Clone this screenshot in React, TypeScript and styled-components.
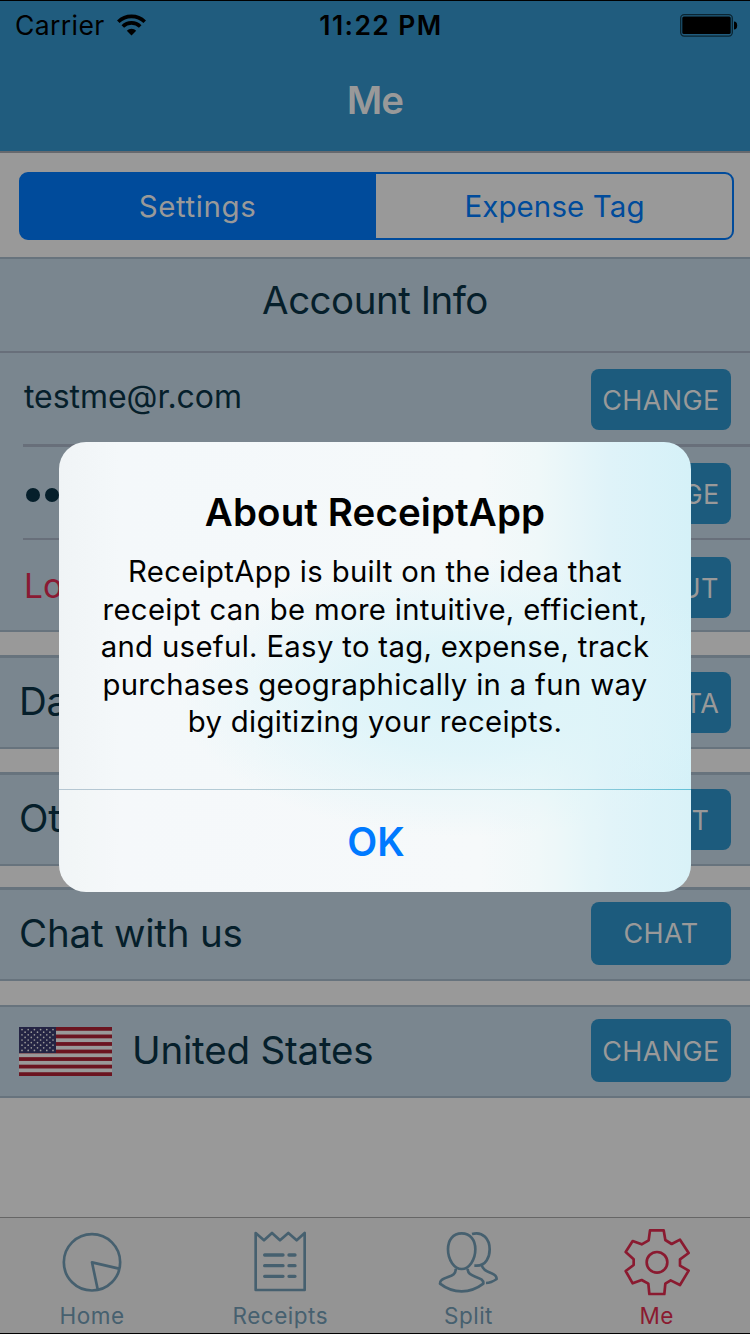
import React from "react";
import styled, { createGlobalStyle } from "styled-components";

const GlobalStyle = createGlobalStyle`
  * { box-sizing: border-box; }
  body { margin: 0; background: #999; overflow: hidden; }
`;

const Screen = styled.div`
  position: relative;
  width: 750px;
  height: 1334px;
  display: flex;
  flex-direction: column;
  overflow: hidden;
  background: #999;
  color: #061f2b;
  font-family: Inter, "Liberation Sans", sans-serif;
  border-top: 1px solid #000;
  border-bottom: 1px solid #000;
  white-space: nowrap;
`;

const Header = styled.header`
  height: 152px;
  flex: none;
  background: #205c7e;
  border-bottom: 2px solid #66696e;
`;

const StatusBar = styled.div`
  height: 49px;
  display: grid;
  grid-template-columns: 1fr auto 1fr;
  align-items: center;
  padding: 0 12px 1px 15px;
  color: #000;
  font-size: 26.5px;
`;

const Carrier = styled.div`
  display: flex;
  align-items: center;
  gap: 12.5px;
  letter-spacing: 0.4px;
`;

const Clock = styled.div`
  padding-left: 9px;
  font-weight: 600;
  letter-spacing: 1.4px;
`;

const BatteryIcon = styled.svg`
  justify-self: end;
  display: block;
`;

const Title = styled.h1`
  margin: 0;
  height: 102px;
  line-height: 101px;
  text-align: center;
  color: #999;
  font-size: 38.5px;
  font-weight: 600;
  letter-spacing: -1px;
`;

const SegmentBar = styled.div`
  height: 104px;
  flex: none;
  padding: 19px 16px 17px 19px;
`;

const Segments = styled.div`
  display: flex;
  height: 68px;
  border: 2px solid #004b9b;
  border-radius: 9px;
  background: linear-gradient(90deg, #004b9b 50%, transparent 50%) border-box;
`;

const Segment = styled.button<{ $active?: boolean }>`
  flex: ${(p) => (p.$active ? "0 0 356px" : "1")};
  border: 0;
  padding: 0 ${(p) => (p.$active ? 3 : 0)}px 0 0;
  background: transparent;
  color: ${(p) => (p.$active ? "#999" : "#004b9b")};
  font: 400 29.5px Inter, sans-serif;
  letter-spacing: ${(p) => (p.$active ? 0.6 : 0.1)}px;
`;

const Panel = styled.section<{ $top?: number; $gap?: number }>`
  flex: none;
  margin-top: ${(p) => p.$gap ?? 0}px;
  background: #7a868f;
  border-top: ${(p) => p.$top ?? 3}px solid #67737d;
  border-bottom: 2px solid #67737d;
`;

const PanelHeading = styled.h2`
  margin: 0;
  height: 94px;
  line-height: 83px;
  border-bottom: 2px solid #686f7a;
  text-align: center;
  font-size: 38.5px;
  font-weight: 400;
  letter-spacing: -0.5px;
`;

const Row = styled.div<{ $h?: number; $inset?: number }>`
  display: flex;
  height: ${(p) => p.$h ?? 89}px;
  padding: 0 19px 0 ${(p) => p.$inset ?? 19}px;
`;

const Divider = styled.div<{ $h: number }>`
  height: ${(p) => p.$h}px;
  margin-left: 23px;
  background: #686f7a;
`;

const Label = styled.div<{ $small?: boolean; $danger?: boolean }>`
  flex: 1;
  display: flex;
  align-items: center;
  padding-top: ${(p) => (p.$danger ? 2 : 0)}px;
  padding-bottom: ${(p) => (p.$danger ? 0 : 4)}px;
  font-size: ${(p) => (p.$danger ? 33.5 : p.$small ? 32 : 38.5)}px;
  letter-spacing: ${(p) => (p.$danger || p.$small ? -0.05 : -0.2)}px;
  color: ${(p) => (p.$danger ? "#8a1a33" : "inherit")};
`;

const Dots = styled.div`
  flex: 1;
  display: flex;
  align-items: center;
  gap: 5.3px;
  padding: 4px 0 0 2px;
`;

const Dot = styled.span`
  width: 14px;
  height: 14px;
  border-radius: 50%;
  background: #061f2b;
`;

const ActionButton = styled.button<{ $offset: number; $h?: number }>`
  width: 140px;
  height: ${(p) => p.$h ?? 61}px;
  margin: ${(p) => p.$offset}px 0 0;
  padding: 1px 0 0;
  border: 0;
  border-radius: 8px;
  background: #1c5b7d;
  color: #999;
  font: 400 27px Inter, sans-serif;
  letter-spacing: 0.4px;
  word-spacing: -5px;
`;

const Flag = styled.svg`
  flex: none;
  align-self: flex-start;
  margin: 20px 20px 0 0;
`;

const TabBar = styled.nav`
  flex: none;
  margin: auto 0 0 -2px;
  width: 753px;
  height: 116px;
  display: flex;
  background: #949494;
  border-top: 1px solid #666;
`;

const Tab = styled.div<{ $active?: boolean }>`
  width: 188.2px;
  display: flex;
  flex-direction: column;
  align-items: center;
  padding-top: 10px;
  color: ${(p) => (p.$active ? "#8a1a30" : "#46606f")};
  font-size: 22.5px;
  line-height: 28px;
  letter-spacing: 0.5px;
`;

const TabIcon = styled.svg`
  width: 68px;
  height: 68px;
  margin-bottom: 6px;
  fill: none;
  stroke: currentColor;
  stroke-width: 8;
  stroke-linejoin: round;
`;

const Dialog = styled.div`
  position: absolute;
  left: 59px;
  top: 441px;
  width: 632px;
  height: 450px;
  display: flex;
  flex-direction: column;
  border-radius: 27px;
  overflow: hidden;
  color: #000;
  text-align: center;
  background:
    radial-gradient(ellipse 290px 140px at 410px 255px, #dbf3f9 0%, rgba(221, 244, 249, 0.85) 40%, rgba(236, 247, 249, 0) 100%),
    linear-gradient(90deg, #f0f4f6 0, #f4f8fa 60px, #f5f9fa 420px, #eff8f9 480px, #dff3f9 550px, #d5f1f8 632px);
`;

const DialogBody = styled.div`
  height: 348px;
  border-bottom: 1px solid;
  border-image: linear-gradient(90deg, #b5c6d2, #b3d3da 70%, #62c0d8) 1;
`;

const DialogTitle = styled.h2`
  margin: 47px 0 0;
  font-size: 38.5px;
  line-height: 46px;
  font-weight: 600;
  letter-spacing: 0.1px;
`;

const DialogText = styled.p`
  margin: 18px 0 0;
  font-size: 29.3px;
  line-height: 37.5px;
  letter-spacing: 0.33px;
`;

const DialogButton = styled.button`
  flex: 1;
  border: 0;
  padding: 1px 0 0 2px;
  background: rgba(255, 255, 255, 0.1);
  color: #007aff;
  font: 600 39px Inter, sans-serif;
`;

const stripes = [0, 1, 2, 3, 4, 5, 6];
const starRows = [0, 1, 2, 3, 4, 5, 6, 7, 8];

function UsFlag() {
  return (
    <Flag width="93" height="49" viewBox="0 0 93 49">
      <rect width="93" height="49" fill="#999" />
      {stripes.map((i) => (
        <rect key={i} y={i * 7.54} width="93" height="3.77" fill="#6b1420" />
      ))}
      <rect width="37" height="26" fill="#242444" />
      {starRows.map((r) =>
        Array.from({ length: r % 2 ? 5 : 6 }, (_, c) => (
          <circle key={`${r}-${c}`} cx={3 + c * 6.2 + (r % 2 ? 3.1 : 0)} cy={2.6 + r * 2.6} r="0.85" fill="#999" />
        )),
      )}
    </Flag>
  );
}

const dialogLines = [
  "ReceiptApp is built on the idea that",
  "receipt can be more intuitive, efficient,",
  "and useful. Easy to tag, expense, track",
  "purchases geographically in a fun way",
  "by digitizing your receipts.",
];

export default function App() {
  return (
    <>
      <GlobalStyle />
      <Screen>
        <Header>
          <StatusBar>
            <Carrier>
              Carrier
              <svg width="29" height="22" viewBox="0 0 29 22" fill="none" stroke="#000" strokeWidth="3.6">
                <path d="M1.3 7.8a18.7 18.7 0 0 1 26.4 0" />
                <path d="M5.8 12.5a12.3 12.3 0 0 1 17.4 0" />
                <path d="M14.5 21.5l-4.7-4.8a6.7 6.7 0 0 1 9.4 0z" fill="#000" stroke="none" />
              </svg>
            </Carrier>
            <Clock>11:22 PM</Clock>
            <BatteryIcon width="58" height="23" viewBox="0 0 58 23">
              <rect x="0.7" y="0.7" width="51.6" height="21.4" rx="3.5" fill="none" stroke="#0a2431" strokeWidth="1.3" />
              <rect x="2.3" y="2.6" width="48.4" height="17.4" rx="1.5" />
              <path d="M54 7.5c2 0 3.2 1.6 3.2 4s-1.2 4-3.2 4z" />
            </BatteryIcon>
          </StatusBar>
          <Title>Me</Title>
        </Header>

        <SegmentBar>
          <Segments>
            <Segment $active>Settings</Segment>
            <Segment>Expense Tag</Segment>
          </Segments>
        </SegmentBar>

        <Panel $top={2}>
          <PanelHeading>Account Info</PanelHeading>
          <Row $h={91} $inset={24}>
            <Label $small>testme@r.com</Label>
            <ActionButton $offset={16}>CHANGE</ActionButton>
          </Row>
          <Divider $h={3} />
          <Row $h={91} $inset={24}>
            <Dots>
              {stripes.map((i) => (
                <Dot key={i} />
              ))}
            </Dots>
            <ActionButton $offset={16}>CHANGE</ActionButton>
          </Row>
          <Divider $h={2} />
          <Row $h={90} $inset={24}>
            <Label $danger>Logout</Label>
            <ActionButton $offset={17}>LOGOUT</ActionButton>
          </Row>
        </Panel>

        <Panel $gap={23}>
          <Row>
            <Label>Data</Label>
            <ActionButton $offset={14}>MY DATA</ActionButton>
          </Row>
        </Panel>
        <Panel $gap={23}>
          <Row>
            <Label>Others</Label>
            <ActionButton $offset={14}>ABOUT</ActionButton>
          </Row>
        </Panel>
        <Panel $gap={21}>
          <Row>
            <Label>Chat with us</Label>
            <ActionButton $offset={11.5} $h={63}>CHAT</ActionButton>
          </Row>
        </Panel>
        <Panel $gap={24} $top={2}>
          <Row>
            <UsFlag />
            <Label>United States</Label>
            <ActionButton $offset={12} $h={63}>CHANGE</ActionButton>
          </Row>
        </Panel>

        <TabBar>
          <Tab>
            <TabIcon viewBox="175 84 204 204">
              <circle cx="277" cy="187" r="84.5" />
              <path d="M294 268L277 187L358 206" />
            </TabIcon>
            Home
          </Tab>
          <Tab>
            <TabIcon viewBox="741 84 204 204">
              <path d="M770 270V99L795 121L819 99L843 121L868 99L893 121L917 99V270Z" />
              <path d="M797 165H852M870 165H888M797 197H852M870 197H888M797 229H852M870 229H888" strokeWidth="10" strokeLinecap="round" />
            </TabIcon>
            Receipts
          </Tab>
          <Tab>
            <TabIcon viewBox="178 84 204 204">
              <path d="M261 100C235 100 220 120 220 148C220 180 239 207 261 207C283 207 302 180 302 148C302 120 287 100 261 100Z" />
              <path d="M243 206C244 222 234 226 220 231C201 238 196 241 196 251C215 266 238 274 261 274C286 274 308 265 326 251C327 240 319 236 302 230C288 225 279 220 279 206" />
              <path d="M292 102C325 93 345 118 345 148C345 170 335 197 306 197H299M321 195C325 211 337 214 349 219C362 224 366 228 366 237C356 244 346 249 334 249" />
            </TabIcon>
            Split
          </Tab>
          <Tab $active>
            <TabIcon viewBox="741 84 204 204">
              <path d="M822 91H863L868 120L887 132L912 119L938 159L912 178V197L938 212L912 255L884 241L868 251L865 282H820L817 251L797 240L770 250L749 213L773 195V178L749 156L770 123L797 133L818 121Z" />
              <circle cx="843" cy="187" r="31" />
            </TabIcon>
            Me
          </Tab>
        </TabBar>

        <Dialog role="alertdialog">
          <DialogBody>
            <DialogTitle>About ReceiptApp</DialogTitle>
            <DialogText>
              {dialogLines.map((line) => (
                <React.Fragment key={line}>
                  {line}
                  <br />
                </React.Fragment>
              ))}
            </DialogText>
          </DialogBody>
          <DialogButton>OK</DialogButton>
        </Dialog>
      </Screen>
    </>
  );
}
